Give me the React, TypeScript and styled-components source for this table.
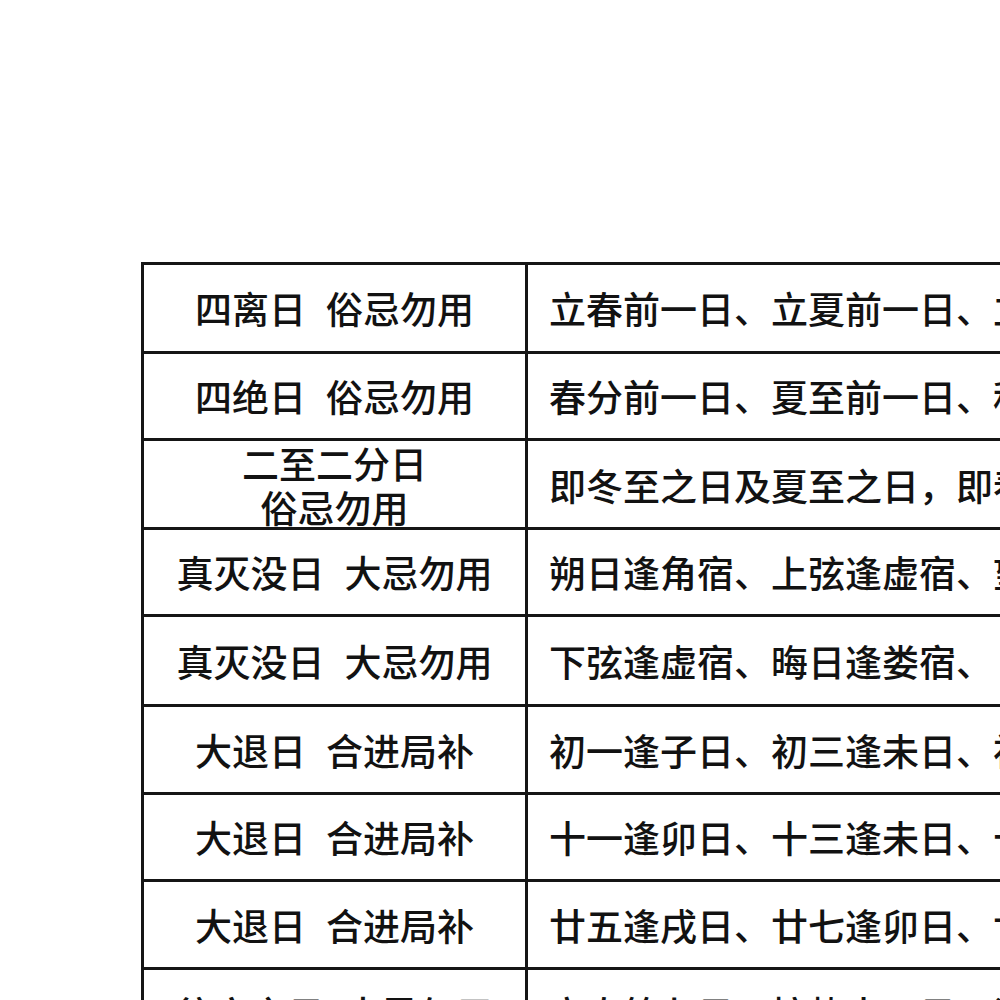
import React from "react";
import styled, { createGlobalStyle } from "styled-components";

const Global = createGlobalStyle`
  html, body {
    margin: 0;
    padding: 0;
    background: #ffffff;
    overflow: hidden;
  }
  body {
    width: 1000px;
    height: 1000px;
    font-family: "Noto Sans CJK SC", "Noto Sans", sans-serif;
    color: #121212;
  }
`;

const Page = styled.div`
  width: 1000px;
  height: 1000px;
  overflow: hidden;
  padding-top: 262px;
  padding-left: 141px;
  box-sizing: border-box;
`;

const Table = styled.div`
  display: flex;
  flex-direction: column;
  width: 1100px;
  border-top: 3px solid #151515;
  border-left: 3px solid #151515;
`;

const Row = styled.div<{ $h: number }>`
  display: grid;
  grid-template-columns: 384px 1fr;
  height: ${(p) => p.$h}px;
  box-sizing: border-box;
  border-bottom: 3px solid #151515;
`;

const KeyCell = styled.div`
  display: flex;
  flex-direction: column;
  align-items: center;
  justify-content: center;
  border-right: 3px solid #151515;
  font-size: 37px;
  font-weight: 500;
  line-height: 44px;
  white-space: nowrap;
  text-align: center;
`;

const ValueCell = styled.div`
  display: flex;
  align-items: center;
  padding-left: 21px;
  font-size: 37px;
  font-weight: 500;
  white-space: nowrap;
  overflow: hidden;
`;

const Line = styled.span`
  display: block;
`;

const Gap = styled.span`
  display: inline-block;
  width: 20px;
`;

type RowData = { key: string[]; value: string; h: number };

const rows: RowData[] = [
  { key: ["四离日", "俗忌勿用"], value: "立春前一日、立夏前一日、立秋前一日、立冬前一日", h: 89 },
  { key: ["四绝日", "俗忌勿用"], value: "春分前一日、夏至前一日、秋分前一日、冬至前一日", h: 87 },
  { key: ["二至二分日\n俗忌勿用"], value: "即冬至之日及夏至之日，即春分之日及秋分之日", h: 89 },
  { key: ["真灭没日", "大忌勿用"], value: "朔日逢角宿、上弦逢虚宿、望日逢亢宿、", h: 87 },
  { key: ["真灭没日", "大忌勿用"], value: "下弦逢虚宿、晦日逢娄宿、", h: 90 },
  { key: ["大退日", "合进局补"], value: "初一逢子日、初三逢未日、初五逢寅日、", h: 88 },
  { key: ["大退日", "合进局补"], value: "十一逢卯日、十三逢未日、十五逢戌日、", h: 87 },
  { key: ["大退日", "合进局补"], value: "廿五逢戌日、廿七逢卯日、廿九逢子日、", h: 88 },
  { key: ["往亡之日", "大忌勿用"], value: "立春第七日、惊蛰十四日、清明二十一日、", h: 88 },
];

export default function App() {
  return (
    <>
      <Global />
      <Page>
        <Table>
          {rows.map((r, i) => (
            <Row key={i} $h={r.h}>
              <KeyCell>
                {r.key.length === 1 ? (
                  r.key[0].split("\n").map((l, j) => <Line key={j}>{l}</Line>)
                ) : (
                  <Line>
                    {r.key[0]}
                    <Gap />
                    {r.key[1]}
                  </Line>
                )}
              </KeyCell>
              <ValueCell>{r.value}</ValueCell>
            </Row>
          ))}
        </Table>
      </Page>
    </>
  );
}
